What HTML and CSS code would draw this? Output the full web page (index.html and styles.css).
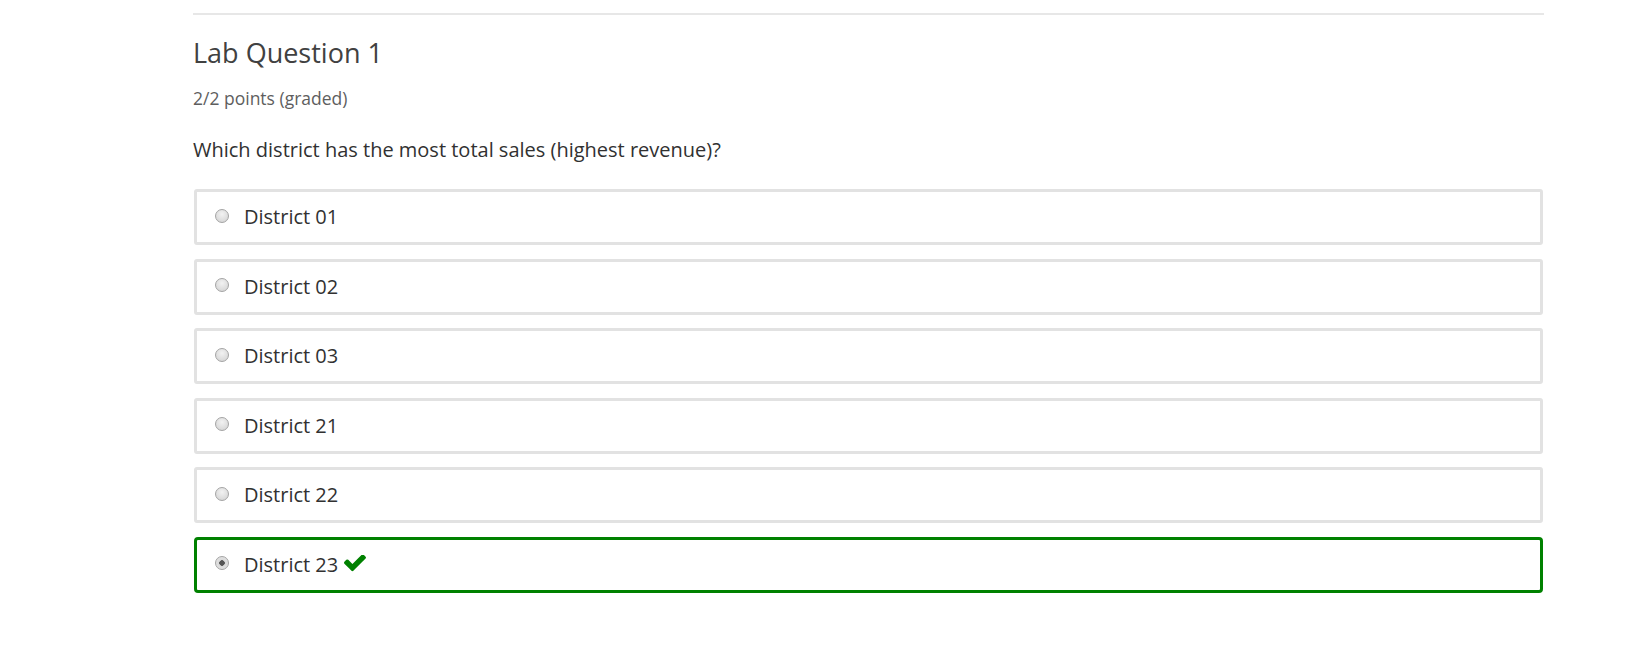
FILE: index.html
```html
<!DOCTYPE html>
<html>
<head>
<meta charset="utf-8">
<link rel="stylesheet" href="styles.css">
</head>
<body>
<div class="wrap">
  <div class="rule"></div>
  <h3 class="title">Lab Question 1</h3>
  <div class="points">2/2 points (graded)</div>
  <p class="question">Which district has the most total sales (highest revenue)?</p>
  <div class="choices">
    <label class="choice"><span class="radio"></span><span class="label">District 01</span></label>
    <label class="choice"><span class="radio"></span><span class="label">District 02</span></label>
    <label class="choice"><span class="radio"></span><span class="label">District 03</span></label>
    <label class="choice"><span class="radio"></span><span class="label">District 21</span></label>
    <label class="choice"><span class="radio"></span><span class="label">District 22</span></label>
    <label class="choice correct"><span class="radio checked"></span><span class="label">District 23</span>
      <svg class="check" viewBox="121 402 1550 1160" width="22" height="17"><path fill="#008100" d="M1671 566q0 40-28 68l-724 724-136 136q-28 28-68 28t-68-28l-136-136-362-362q-28-28-28-68t28-68l136-136q28-28 68-28t68 28l294 295 656-657q28-28 68-28t68 28l136 136q28 28 28 68z"/></svg>
    </label>
  </div>
</div>
</body>
</html>
```

FILE: styles.css
```css
html, body {
  margin: 0;
  padding: 0;
  background: #fff;
}
body {
  font-family: "Open Sans", "Liberation Sans", sans-serif;
  color: #313131;
}
.wrap {
  margin-left: 193px;
  width: 1351px;
  padding-top: 13px;
}
.rule {
  border-top: 2px solid #e7e7e7;
}
.title {
  margin: 20px 0 0 0;
  font-size: 27px;
  font-weight: 400;
  line-height: 36px;
  color: #414141;
}
.points {
  margin-top: 15px;
  font-size: 17.5px;
  line-height: 24px;
  color: #5e5e5e;
}
.question {
  margin: 26px 0 0 0;
  font-size: 20px;
  line-height: 28px;
  color: #313131;
}
.choices {
  display: flex;
  flex-direction: column;
  gap: 13.6px;
  margin-top: 25px;
  padding-left: 1px;
  width: 1349px;
}
.choice {
  display: flex;
  align-items: center;
  height: 56px;
  box-sizing: border-box;
  border: 3px solid #e2e2e2;
  border-radius: 3px;
  padding-left: 18px;
  padding-bottom: 1px;
  font-size: 20px;
}
.choice.correct {
  border-color: #008100;
  border-radius: 4px;
}
.radio {
  width: 14px;
  height: 14px;
  border-radius: 50%;
  box-sizing: border-box;
  border: 1px solid #a4a4a4;
  background: radial-gradient(circle at 50% 35%, #f2f2f2, #d0d0d0);
  margin-right: 15px;
  flex: none;
  position: relative;
  top: -1px;
}
.radio.checked {
  background: radial-gradient(circle, #555 0 2.5px, #d9d9d9 3px, #e8e8e8 100%);
}
.label {
  color: #313131;
}
.check {
  margin-left: 6px;
  position: relative;
  top: -1px;
}
```
